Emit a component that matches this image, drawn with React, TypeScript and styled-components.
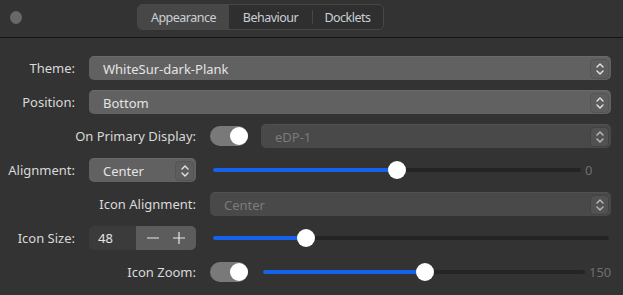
import React from 'react'
import styled, { createGlobalStyle } from 'styled-components'

const GlobalStyle = createGlobalStyle`
  html, body {
    margin: 0;
    padding: 0;
    background: #333333;
  }
  body {
    font-family: "Noto Sans", "Open Sans", sans-serif;
    font-size: 13px;
    color: #dadada;
  }
`

const Window = styled.div`
  width: 623px;
  height: 295px;
  background: #333333;
  overflow: hidden;
`

const Header = styled.div`
  height: 37px;
  border-bottom: 1px solid #141414;
  display: flex;
  align-items: center;
  padding-left: 137px;
  position: relative;
`

const Dot = styled.span`
  position: absolute;
  left: 10px;
  top: 11px;
  width: 12px;
  height: 13px;
  border-radius: 50%;
  background: #686868;
`

const Tabs = styled.div`
  display: flex;
  height: 24px;
  margin-top: -3px;
  border: 1px solid #484848;
  border-radius: 5px;
  background: #2f2f2f;
  overflow: hidden;
`

const Tab = styled.div<{ $active?: boolean; $divider?: boolean; $w: number }>`
  width: ${p => p.$w}px;
  display: flex;
  align-items: center;
  justify-content: center;
  font-size: 12.5px;
  letter-spacing: -0.5px;
  color: #c9d0d6;
  background: ${p => (p.$active ? '#474747' : 'transparent')};
  position: relative;
  &::before {
    content: '';
    display: ${p => (p.$divider ? 'block' : 'none')};
    position: absolute;
    left: 0;
    top: 5px;
    bottom: 5px;
    width: 1px;
    background: #464646;
  }
`

const Form = styled.div`
  display: grid;
  grid-template-columns: 75px 107px 401px;
  column-gap: 14px;
  row-gap: 10px;
  padding: 18px 0 0 0;
  grid-auto-rows: 24px;
`

const Label = styled.div<{ $wide?: boolean }>`
  grid-column: ${p => (p.$wide ? '1 / span 2' : '1')};
  display: flex;
  align-items: center;
  justify-content: flex-end;
  white-space: nowrap;
  color: #d9d9d9;
`

const Cell = styled.div<{ $span?: boolean; $gap?: number }>`
  grid-column: ${p => (p.$span ? '2 / span 2' : 'auto')};
  display: flex;
  align-items: center;
  gap: ${p => p.$gap ?? 0}px;
  min-width: 0;
`

const Combo = styled.div<{ $disabled?: boolean }>`
  flex: 1;
  height: 24px;
  box-sizing: border-box;
  display: flex;
  align-items: center;
  padding: 0 2px 0 14px;
  border-radius: 5px;
  background: ${p => (p.$disabled ? '#494949' : '#616161')};
  border-top: 1px solid ${p => (p.$disabled ? '#505050' : '#6a6a6a')};
  color: ${p => (p.$disabled ? '#7b7b7b' : '#e4e4e4')};
  min-width: 0;
`

const ComboText = styled.span`
  flex: 1;
  white-space: nowrap;
  overflow: hidden;
`

const Stepper = styled.span<{ $disabled?: boolean }>`
  width: 19px;
  height: 20px;
  box-sizing: border-box;
  border-radius: 4px;
  border: 1px solid ${p => (p.$disabled ? '#424242' : '#545454')};
  background: ${p => (p.$disabled ? '#525252' : '#5d5d5d')};
  display: flex;
  align-items: center;
  justify-content: center;
`

const Switch = styled.span<{ $after?: number }>`
  flex: none;
  width: 38px;
  height: 20px;
  margin-right: ${p => p.$after ?? 0}px;
  border-radius: 10px;
  background: #797979;
  position: relative;
  &::after {
    content: '';
    position: absolute;
    right: 0;
    top: 1px;
    width: 18px;
    height: 18px;
    border-radius: 50%;
    background: #ffffff;
  }
`

const SliderBox = styled.div<{ $trim?: number }>`
  flex: 1;
  height: 24px;
  position: relative;
  margin-left: 3px;
  margin-right: ${p => p.$trim ?? 0}px;
`

const Track = styled.div`
  position: absolute;
  left: 0;
  right: 0;
  top: 10px;
  height: 4px;
  border-radius: 2px;
  background: #242424;
`

const Fill = styled.div`
  position: absolute;
  left: 0;
  top: 10px;
  height: 4px;
  border-radius: 2px;
  background: #1662ea;
`

const Knob = styled.div`
  position: absolute;
  top: 3px;
  width: 18px;
  height: 18px;
  margin-left: -9px;
  border-radius: 50%;
  background: #ffffff;
`

const Value = styled.span<{ $pad?: number }>`
  flex: none;
  width: 26px;
  box-sizing: border-box;
  padding-left: ${p => p.$pad ?? 0}px;
  color: #6f6f6f;
  white-space: nowrap;
`

const Spin = styled.div`
  width: 107px;
  height: 24px;
  display: flex;
  border-radius: 5px;
  overflow: hidden;
`

const SpinValue = styled.span`
  width: 47px;
  background: #3b3b3b;
  padding-left: 9px;
  box-sizing: border-box;
  display: flex;
  align-items: center;
  color: #e4e4e4;
`

const SpinButtons = styled.span`
  flex: 1;
  background: #5c5c5c;
  display: flex;
  align-items: center;
  justify-content: space-around;
  padding: 0 4px;
`

const Chevrons = ({ color = '#e6e6e6' }: { color?: string }) => (
  <svg width="10" height="14" viewBox="0 0 10 14" fill="none" stroke={color} strokeWidth="1.4" strokeLinecap="round" strokeLinejoin="round">
    <path d="M2 5 L5 2 L8 5" />
    <path d="M2 9 L5 12 L8 9" />
  </svg>
)

const Minus = () => (
  <svg width="12" height="12" viewBox="0 0 12 12" stroke="#e8e8e8" strokeWidth="1.2">
    <path d="M0 6 H12" />
  </svg>
)

const Plus = () => (
  <svg width="12" height="12" viewBox="0 0 12 12" stroke="#e8e8e8" strokeWidth="1.2">
    <path d="M0 6 H12 M6 0 V12" />
  </svg>
)

const Select = ({ text, disabled }: { text: string; disabled?: boolean }) => (
  <Combo $disabled={disabled}>
    <ComboText>{text}</ComboText>
    <Stepper $disabled={disabled}>
      <Chevrons color={disabled ? '#bdbdbd' : '#e6e6e6'} />
    </Stepper>
  </Combo>
)

const Slider = ({ pct, trim }: { pct: number; trim?: number }) => (
  <SliderBox $trim={trim}>
    <Track />
    <Fill style={{ width: `${pct}%` }} />
    <Knob style={{ left: `${pct}%` }} />
  </SliderBox>
)

export default function App() {
  return (
    <Window>
      <GlobalStyle />
      <Header>
        <Dot />
        <Tabs>
          <Tab $active $w={91}>Appearance</Tab>
          <Tab $w={83}>Behaviour</Tab>
          <Tab $divider $w={71}>Docklets</Tab>
        </Tabs>
      </Header>
      <Form>
        <Label>Theme:</Label>
        <Cell $span><Select text="WhiteSur-dark-Plank" /></Cell>

        <Label>Position:</Label>
        <Cell $span><Select text="Bottom" /></Cell>

        <Label $wide>On Primary Display:</Label>
        <Cell $gap={13}>
          <Switch />
          <Select text="eDP-1" disabled />
        </Cell>

        <Label>Alignment:</Label>
        <Cell><Select text="Center" /></Cell>
        <Cell>
          <Slider pct={50} trim={4} />
          <Value>0</Value>
        </Cell>

        <Label $wide>Icon Alignment:</Label>
        <Cell>
          <Select text="Center" disabled />
        </Cell>

        <Label>Icon Size:</Label>
        <Cell>
          <Spin>
            <SpinValue>48</SpinValue>
            <SpinButtons>
              <Minus />
              <Plus />
            </SpinButtons>
          </Spin>
        </Cell>
        <Cell>
          <Slider pct={23.6} trim={2} />
        </Cell>

        <Label $wide>Icon Zoom:</Label>
        <Cell>
          <Switch $after={12} />
          <Slider pct={50.2} trim={0} />
          <Value $pad={4}>150</Value>
        </Cell>
      </Form>
    </Window>
  )
}
